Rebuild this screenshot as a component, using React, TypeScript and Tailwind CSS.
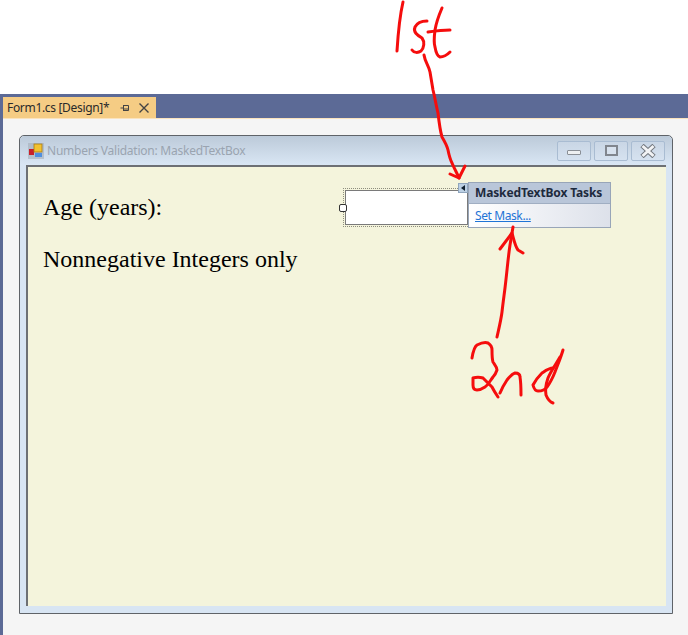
function Scribbles() {
  const strokes = [
    "M403 2 C400 15 398 35 397 51",
    "M427 21 C421 21 417 23 415 27 C413 32 417 35 422 38 C425 42 424 48 421 51 C418 53 414 53 412 50",
    "M442 8 C439 15 436 24 435 30 C434 38 434 44 435 47 C436 53 437 56 440 57 C444 57 447 55 450 52",
    "M428 32 C435 31 443 30 450 30",
    "M424 55 C425 62 429 66 430 72 C431 78 432 84 433 90 C435 98 436 105 438 113 C439 122 440 130 442 137 C445 142 447 146 448 150 C449 155 450 159 452 163 C454 168 457 173 459 178",
    "M450 174 L459 178 L465 166",
    "M497 337 C499 328 501 320 502 312 C503 303 504 296 505 288 C507 272 508 258 510 245 L513 227",
    "M500 249 L512 233 C514 240 515 246 518 250 L523 253",
    "M472 358 C473 352 474 347 477 345 C481 343 485 342 488 343 C491 345 492 347 492 350 C492 355 492 359 493 362 C495 365 497 367 497 370 C496 373 495 375 493 377 C490 381 488 385 485 387 C482 389 480 390 477 390 C474 390 473 388 473 385 L473 378 C476 377 480 377 483 378 C486 381 489 384 492 387 C494 391 496 394 498 397",
    "M500 393 C502 388 505 383 507 380 C510 376 512 374 515 373 C518 373 520 374 520 377 C521 383 521 389 521 395",
    "M553 368 C549 368 545 371 542 373 C538 377 535 381 533 385 C534 389 536 391 538 391 C542 391 545 390 547 387 C550 383 553 377 555 372 C558 364 561 357 563 350",
    "M560 357 C556 364 551 371 548 378 C546 384 545 390 546 395 C548 400 550 402 553 403",
  ];
  return (
    <svg className="absolute inset-0 pointer-events-none" width="688" height="635" viewBox="0 0 688 635" fill="none">
      {strokes.map((d) => (
        <path key={d} d={d} stroke="#f50d0d" strokeWidth="3" strokeLinecap="round" strokeLinejoin="round" />
      ))}
    </svg>
  );
}

function FormIcon() {
  return (
    <svg width="16" height="16" viewBox="0 0 16 16" className="shrink-0">
      <rect x="0" y="0" width="16" height="16" fill="#aab3bf" opacity="0.7" />
      <rect x="1" y="6" width="5" height="6" fill="#c8202a" />
      <rect x="6" y="1" width="8" height="8" fill="#f2c230" stroke="#a97c14" strokeWidth="0.8" />
      <rect x="7" y="10" width="7" height="4" fill="#4f8fdf" />
    </svg>
  );
}

function CaptionButton({ children }: { children: React.ReactNode }) {
  return (
    <div className="w-[34px] h-[20px] flex items-center justify-center rounded-[2px] border border-[#a9bcd2] bg-gradient-to-b from-[#c9d6e5] to-[#d6e2f0]">
      {children}
    </div>
  );
}

export default function App() {
  return (
    <div className="relative w-[688px] h-[635px] bg-white flex flex-col overflow-hidden font-['Open_Sans',sans-serif]">
      <div className="h-[94px]" />
      <div className="flex-1 flex flex-col border-l-[3px] border-[#5c6a96]">
        <div className="h-[24px] bg-[#5c6a96] pt-[3px]">
          <div className="w-[153px] h-[21px] bg-[#f5cc84] flex items-center pl-[4px] text-[12px] text-[#2a2a2a]">
            <span className="whitespace-nowrap tracking-[-0.32px] font-['Noto_Sans',sans-serif]">Form1.cs [Design]*</span>
            <svg width="10" height="10" viewBox="0 0 10 10" className="ml-[11px]" fill="none" stroke="#444" strokeWidth="1">
              <path d="M0.5 5 H3 M3.5 2 V8 M3.5 2.5 H8.5 V7.5 H3.5 M3.5 6 H8.5" />
            </svg>
            <svg width="10" height="10" viewBox="0 0 10 10" className="ml-[9px]" fill="none" stroke="#444" strokeWidth="1.4">
              <path d="M0.5 0.5 L9.5 9.5 M9.5 0.5 L0.5 9.5" />
            </svg>
          </div>
        </div>
        <div className="h-px bg-[#fbe3bd]" />
        <div className="flex-1 bg-[#f5f5f5] pt-[16px] pl-[16px]">
          <div className="w-[654px] h-[479px] flex flex-col rounded-t-[5px] border border-[#5f6368] bg-[#d8e5f3]">
            <div className="h-[29px] flex items-center pl-[8px] pr-[7px] rounded-t-[5px] bg-gradient-to-b from-[#bccad9] to-[#d9e6f4]">
              <FormIcon />
              <span className="ml-[3px] text-[12px] text-[#9aa4b0] whitespace-nowrap font-['Noto_Sans',sans-serif] tracking-[-0.24px]">
                Numbers Validation: MaskedTextBox
              </span>
              <div className="ml-auto flex items-center gap-[3px]">
                <CaptionButton>
                  <div className="w-[14px] h-[5px] mt-[3px] rounded-[1px] bg-[#eef0f2] border border-[#8a8f96]" />
                </CaptionButton>
                <CaptionButton>
                  <div className="w-[13px] h-[11px] border-2 border-[#81868e] bg-[#d8e2ee]" />
                </CaptionButton>
                <CaptionButton>
                  <svg width="16" height="14" viewBox="0 0 16 14" fill="none">
                    <path d="M2 1.5 L14 12.5 M14 1.5 L2 12.5" stroke="#70757c" strokeWidth="4.8" />
                    <path d="M2.5 2 L13.5 12 M13.5 2 L2.5 12" stroke="#f2f3f5" strokeWidth="3" />
                  </svg>
                </CaptionButton>
              </div>
            </div>
            <div className="relative mx-[6px] mb-[7px] flex-1 bg-[#f4f4dc] border-l-2 border-t-2 border-r-0 border-[#6d7074] pl-[15px] pt-[25px] font-['Liberation_Serif',serif] text-[24px] leading-[30px] text-black">
              <p>Age (years):</p>
              <p className="mt-[22px]">Nonnegative Integers only</p>

              <div className="absolute left-[315px] top-[21px] w-[127px] h-[39px] border border-dotted border-[#8d8d7d] p-px">
                <div className="w-full h-full bg-white border border-[#7a7a7a]" />
                <div className="absolute left-[-5px] top-[15px] w-[8px] h-[8px] bg-white border border-[#333] rounded-[2px]" />
              </div>

              <div className="absolute left-[430px] top-[16px] w-[10px] h-[10px] bg-[#bcd0e4] border border-[#8fa5bd] flex items-center justify-center">
                <div className="w-0 h-0 border-y-[3px] border-y-transparent border-r-[4px] border-r-[#10202f]" />
              </div>

              <div className="absolute left-[440px] top-[15px] w-[143px] h-[46px] border border-[#98a5b8] bg-gradient-to-r from-white to-[#dde1ea] font-['Noto_Sans',sans-serif]">
                <div className="h-[21px] bg-[#b9c6d9] border-b border-[#a0aec2] pl-[6px] text-[12px] leading-[20px] font-bold text-[#1e2a3d] whitespace-nowrap tracking-[-0.14px]">
                  MaskedTextBox Tasks
                </div>
                <div className="pl-[6px] pt-[3px] text-[12px] leading-[18px] text-[#1f74d6] underline whitespace-nowrap tracking-[-0.4px]">
                  Set Mask...
                </div>
              </div>
            </div>
          </div>
        </div>
      </div>
      <Scribbles />
    </div>
  );
}
